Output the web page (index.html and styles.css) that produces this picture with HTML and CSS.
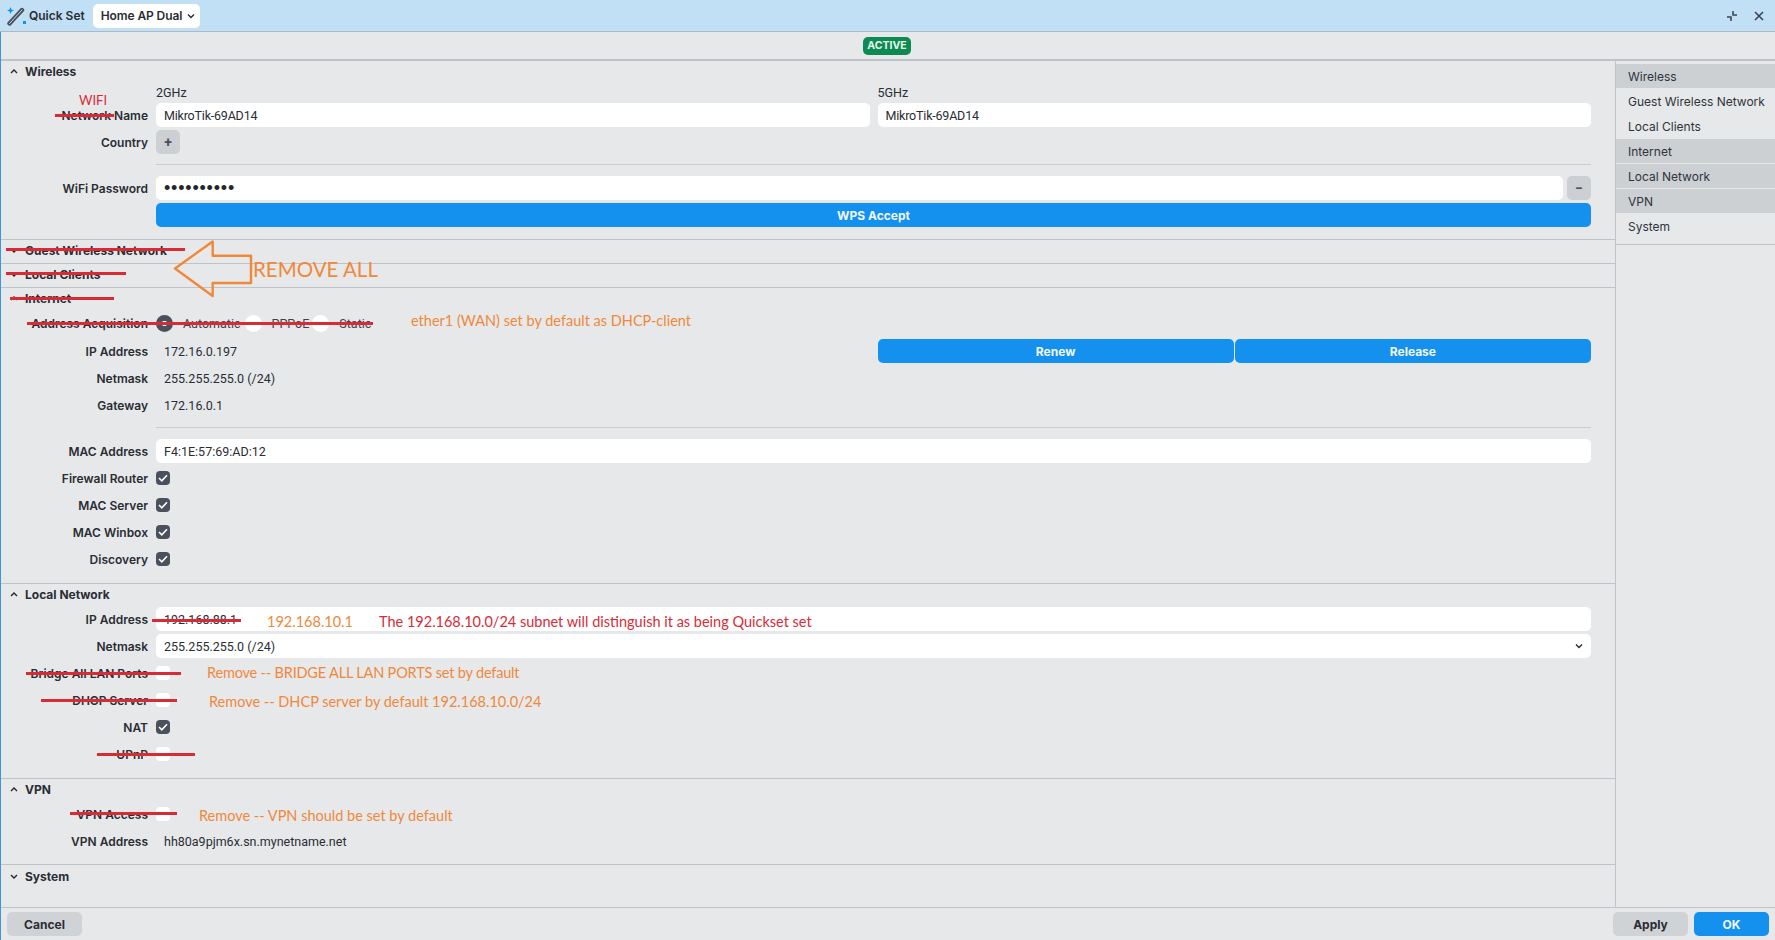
FILE: index.html
```html
<!DOCTYPE html>
<html lang="en">
<head>
<meta charset="utf-8">
<title>Quick Set</title>
<link rel="stylesheet" href="styles.css">
</head>
<body>
<div class="window">
  <header class="titlebar">
    <svg class="wand" width="20" height="20" viewBox="0 0 20 20"><path d="M3.500 17.500 16 4" stroke="#4a515d" stroke-width="4.400" stroke-linecap="round"/><path d="M3.500 17.500 16 4" stroke="#c1dff5" stroke-width="1" stroke-linecap="round"/><path d="M4.500 1 5.500 3.500 8 4.500 5.500 5.500 4.500 8 3.500 5.500 1 4.500 3.500 3.500z" fill="#1490ee"/><rect x="17" y="15" width="3" height="3" fill="#1490ee"/></svg>
    <span class="title">Quick Set</span>
    <div class="preset"><span>Home AP Dual</span><svg class="chev-s" width="8" height="6" viewBox="0 0 8 6"><path d="M1 1.500 4 4.500 7 1.500" fill="none" stroke="#23262b" stroke-width="1.300"/></svg></div>
    <div class="win-btns">
      <svg width="12" height="12" viewBox="0 0 12 12"><path d="M1 7H5V11M11 5H7V1" fill="none" stroke="#3c434d" stroke-width="1.500"/></svg>
      <svg width="12" height="12" viewBox="0 0 12 12"><path d="M2 2 10 10M10 2 2 10" stroke="#3c434d" stroke-width="1.600"/></svg>
    </div>
  </header>
  <div class="frame">
    <div class="status"><span class="badge">ACTIVE</span></div>
    <div class="columns">
      <main class="main">
        <section class="sec">
          <h2 class="sec-head"><svg class="chev" width="10" height="7" viewBox="0 0 10 7"><path d="M2 5 5 2 8 5" fill="none" stroke="#23262b" stroke-width="1.400"/></svg>Wireless</h2>
          <div class="row freq"><span class="label"></span><div class="two"><span>2GHz</span><span>5GHz</span></div></div>
          <div class="row first"><span class="label">Network Name</span><div class="two"><div class="input name">MikroTik-69AD14</div><div class="input name">MikroTik-69AD14</div></div></div>
          <div class="row"><span class="label">Country</span><div class="val"><span class="square">+</span></div></div>
          <div class="sep"></div>
          <div class="row"><span class="label">WiFi Password</span><div class="val pw"><div class="input grow dots">••••••••••</div><span class="square">−</span></div></div>
          <div class="row"><span class="label"></span><div class="btn primary wide">WPS Accept</div></div>
        </section>
        <section class="sec closed"><h2 class="sec-head"><svg class="chev" width="10" height="7" viewBox="0 0 10 7"><path d="M2 2 5 5 8 2" fill="none" stroke="#23262b" stroke-width="1.400"/></svg>Guest Wireless Network</h2></section>
        <section class="sec closed"><h2 class="sec-head"><svg class="chev" width="10" height="7" viewBox="0 0 10 7"><path d="M2 2 5 5 8 2" fill="none" stroke="#23262b" stroke-width="1.400"/></svg>Local Clients</h2></section>
        <section class="sec">
          <h2 class="sec-head"><svg class="chev" width="10" height="7" viewBox="0 0 10 7"><path d="M2 5 5 2 8 5" fill="none" stroke="#23262b" stroke-width="1.400"/></svg>Internet</h2>
          <div class="row row-radios"><span class="label">Address Acquisition</span><div class="val radios">
            <span class="radio on"></span><span class="opt opt-a">Automatic</span>
            <span class="radio"></span><span class="opt opt-b">PPPoE</span>
            <span class="radio"></span><span class="opt">Static</span>
          </div></div>
          <div class="row"><span class="label">IP Address</span><div class="two"><span class="text">172.16.0.197</span><div class="btn-pair"><div class="btn primary">Renew</div><div class="btn primary">Release</div></div></div></div>
          <div class="row"><span class="label">Netmask</span><div class="val text">255.255.255.0 (/24)</div></div>
          <div class="row"><span class="label">Gateway</span><div class="val text">172.16.0.1</div></div>
          <div class="sep"></div>
          <div class="row"><span class="label">MAC Address</span><div class="input grow">F4:1E:57:69:AD:12</div></div>
          <div class="row"><span class="label">Firewall Router</span><div class="val"><span class="check on"><svg width="10" height="8" viewBox="0 0 10 8"><path d="M1 4 3.800 6.800 9 1.200" fill="none" stroke="#fff" stroke-width="1.600"/></svg></span></div></div>
          <div class="row"><span class="label">MAC Server</span><div class="val"><span class="check on"><svg width="10" height="8" viewBox="0 0 10 8"><path d="M1 4 3.800 6.800 9 1.200" fill="none" stroke="#fff" stroke-width="1.600"/></svg></span></div></div>
          <div class="row"><span class="label">MAC Winbox</span><div class="val"><span class="check on"><svg width="10" height="8" viewBox="0 0 10 8"><path d="M1 4 3.800 6.800 9 1.200" fill="none" stroke="#fff" stroke-width="1.600"/></svg></span></div></div>
          <div class="row"><span class="label">Discovery</span><div class="val"><span class="check on"><svg width="10" height="8" viewBox="0 0 10 8"><path d="M1 4 3.800 6.800 9 1.200" fill="none" stroke="#fff" stroke-width="1.600"/></svg></span></div></div>
        </section>
        <section class="sec">
          <h2 class="sec-head"><svg class="chev" width="10" height="7" viewBox="0 0 10 7"><path d="M2 5 5 2 8 5" fill="none" stroke="#23262b" stroke-width="1.400"/></svg>Local Network</h2>
          <div class="row"><span class="label">IP Address</span><div class="input grow">192.168.88.1</div></div>
          <div class="row"><span class="label">Netmask</span><div class="input grow select"><span>255.255.255.0 (/24)</span><svg width="8" height="6" viewBox="0 0 8 6"><path d="M1 1.500 4 4.500 7 1.500" fill="none" stroke="#23262b" stroke-width="1.300"/></svg></div></div>
          <div class="row"><span class="label">Bridge All LAN Ports</span><div class="val"><span class="check"></span></div></div>
          <div class="row"><span class="label">DHCP Server</span><div class="val"><span class="check"></span></div></div>
          <div class="row"><span class="label">NAT</span><div class="val"><span class="check on"><svg width="10" height="8" viewBox="0 0 10 8"><path d="M1 4 3.800 6.800 9 1.200" fill="none" stroke="#fff" stroke-width="1.600"/></svg></span></div></div>
          <div class="row"><span class="label">UPnP</span><div class="val"><span class="check"></span></div></div>
        </section>
        <section class="sec sec-vpn">
          <h2 class="sec-head"><svg class="chev" width="10" height="7" viewBox="0 0 10 7"><path d="M2 5 5 2 8 5" fill="none" stroke="#23262b" stroke-width="1.400"/></svg>VPN</h2>
          <div class="row"><span class="label">VPN Access</span><div class="val"><span class="check"></span></div></div>
          <div class="row"><span class="label">VPN Address</span><div class="val text">hh80a9pjm6x.sn.mynetname.net</div></div>
        </section>
        <section class="sec last"><h2 class="sec-head"><svg class="chev" width="10" height="7" viewBox="0 0 10 7"><path d="M2 2 5 5 8 2" fill="none" stroke="#23262b" stroke-width="1.400"/></svg>System</h2></section>
      </main>
      <nav class="side">
        <div class="side-list">
          <a class="item on">Wireless</a>
          <a class="item">Guest Wireless Network</a>
          <a class="item">Local Clients</a>
          <a class="item on">Internet</a>
          <a class="item on">Local Network</a>
          <a class="item on">VPN</a>
          <a class="item">System</a>
        </div>
      </nav>
    </div>
    <footer class="foot">
      <div class="btn grey">Cancel</div>
      <div class="foot-right"><div class="btn grey">Apply</div><div class="btn primary">OK</div></div>
    </footer>
  </div>
  <div class="notes">
    <i class="strike s-network"></i><i class="strike s-guest"></i><i class="strike s-clients"></i><i class="strike s-internet"></i><i class="strike s-addr"></i><i class="strike s-ip"></i><i class="strike s-bridge"></i><i class="strike s-dhcp"></i><i class="strike s-upnp"></i><i class="strike s-vpn"></i>
    <svg class="arrow" width="90" height="70" viewBox="170 236 90 70"><path d="M175 268.500 212.700 241.500V255.700H251V283H212.700V296Z" fill="none" stroke="#f0883a" stroke-width="2.400" stroke-linejoin="round"/></svg>
    <span class="note red n-wifi">WIFI</span>
    <span class="note big n-remove">REMOVE ALL</span>
    <span class="note n-ether">ether1 (WAN) set by default as DHCP-client</span>
    <span class="note n-ip">192.168.10.1</span>
    <span class="note red n-subnet">The 192.168.10.0/24 subnet will distinguish it as being Quickset set</span>
    <span class="note n-bridge">Remove -- BRIDGE ALL LAN PORTS set by default</span>
    <span class="note n-dhcp">Remove -- DHCP server by default 192.168.10.0/24</span>
    <span class="note n-vpn">Remove -- VPN should be set by default</span>
  </div>
</div>
</body>
</html>
```
FILE: styles.css
```css
* { box-sizing: border-box; }
html, body { margin: 0; padding: 0; height: 100%; overflow: hidden; }
body { font-family: Roboto, "Liberation Sans", sans-serif; font-size: 12.500px; color: #2a2d33; background: #e6e8ea; }
.window { position: relative; width: 1775px; height: 940px; display: flex; flex-direction: column; }
.titlebar { height: 32px; flex: none; background: #c1dff5; border-bottom: 1px solid #aeb9c2; display: flex; align-items: center; padding: 0 0 0 6px; }
.wand { flex: none; margin-right: 3px; }
.title { font-family: Inter, sans-serif; font-size: 12px; font-weight: 600; color: #2a2f36; margin-right: 8px; white-space: nowrap; }
.preset { font-family: Inter, sans-serif; font-size: 12px; letter-spacing: -.1px; height: 24px; width: 107px; background: #fff; border-radius: 5px; display: flex; align-items: center; gap: 5px; padding-left: 8px; font-weight: 600; white-space: nowrap; }
.win-btns { margin-left: auto; display: flex; align-items: center; gap: 15px; padding-right: 10px; }
.frame { flex: 1; min-height: 0; display: flex; flex-direction: column; border-left: 1px solid #3a97e6; }
.status { height: 29px; flex: none; border-bottom: 2px solid #bdc3c8; display: flex; align-items: center; justify-content: center; padding-right: 2px; }
.badge { font-family: Inter, sans-serif; background: #0c8a52; color: #e6f5ee; font-size: 10.500px; font-weight: 700; border-radius: 5px; height: 18px; width: 48px; display: flex; align-items: center; justify-content: center; }
.columns { flex: 1; min-height: 0; display: flex; }
.main { width: 1615px; flex: none; border-right: 1px solid #bdc3c8; display: flex; flex-direction: column; }
.sec { border-bottom: 1px solid #bdc3c8; padding: 0 24px 12px 0; }
.sec.closed { padding-bottom: 3px; }
.sec.last { border-bottom: 0; padding-top: 1px; }
.sec-vpn { padding-bottom: 11px; }
.sec-head { font-family: Inter, sans-serif; margin: 0; height: 20px; font-size: 12px; font-weight: 700; color: #2a2d33; display: flex; align-items: center; padding-left: 8px; }
.chev { margin-right: 6px; flex: none; }
.row { display: flex; align-items: center; height: 24px; margin-top: 3px; }
.row.freq { height: 22px; margin-top: 0; }
.row.first { margin-top: 0; }
.row.row-radios { height: 25px; }
.label { font-family: Inter, sans-serif; font-size: 12px; width: 147px; flex: none; text-align: right; margin-right: 8px; font-weight: 600; color: #2a2d33; white-space: nowrap; }
.two { flex: 1; display: grid; grid-template-columns: 1fr 1fr; gap: 8px; align-items: center; min-width: 0; }
.val { flex: 1; display: flex; align-items: center; min-width: 0; }
.text { padding-left: 8px; }
.input { height: 24px; background: #fff; border-radius: 5px; padding: 0 8px; display: flex; align-items: center; }
.name { letter-spacing: -.2px; }
.grow { flex: 1; }
.dots { font-family: "Liberation Sans", sans-serif; font-size: 18px; letter-spacing: .8px; color: #23262b; }
.pw { gap: 4px; }
.select { justify-content: space-between; padding-right: 8px; }
.square { width: 24px; height: 24px; border-radius: 5px; background: #ccd0d3; color: #4a515d; display: flex; align-items: center; justify-content: center; font-size: 14px; font-weight: 700; flex: none; }
.sep { height: 1px; background: #c9cdd1; margin: 10px 0 11px 155px; }
.btn { font-family: Inter, sans-serif; font-size: 12px; height: 24px; border-radius: 5px; display: flex; align-items: center; justify-content: center; font-weight: 700; }
.primary { background: #1490ee; color: #f2f8fe; }
.wide { flex: 1; }
.grey { background: #d0d3d6; color: #2a2d33; width: 75px; }
.btn-pair { display: grid; grid-template-columns: 1fr 1fr; gap: 1px; }
.radio { width: 17px; height: 17px; border-radius: 50%; background: #fff; flex: none; }
.radio.on { background: radial-gradient(circle, #fff 0 2.500px, #4a515d 3px); }
.opt { margin-left: 10px; color: #3c434d; }
.opt-a { margin-right: 4px; }
.opt-b { margin-right: 3px; }
.check { width: 14px; height: 14px; border-radius: 4px; background: #fff; display: flex; align-items: center; justify-content: center; flex: none; }
.check.on { background: #4a515d; }
.side { flex: 1; min-width: 0; }
.side-list { padding: 3px 0 6px; border-bottom: 1px solid #bdc3c8; display: flex; flex-direction: column; gap: 1px; }
.item { font-family: Inter, sans-serif; font-size: 12px; height: 24px; display: flex; align-items: center; padding-left: 12px; color: #2f343b; white-space: nowrap; }
.item.on { background: #ccd0d3; }
.foot { height: 33px; flex: none; border-top: 1px solid #bdc3c8; display: flex; justify-content: space-between; align-items: center; padding: 0 6px; }
.foot-right { display: flex; gap: 6px; }
.foot .primary { width: 75px; }

.notes { position: absolute; inset: 0; pointer-events: none; }
.strike { position: absolute; height: 3px; background: #d92b36; }
.s-network { left: 55px; top: 114px; width: 59px; }
.s-guest { left: 6px; top: 248px; width: 179px; }
.s-clients { left: 6px; top: 272px; width: 120px; }
.s-internet { left: 10px; top: 297px; width: 104px; }
.s-addr { left: 27px; top: 322px; width: 346px; }
.s-ip { left: 152px; top: 619px; width: 89px; }
.s-bridge { left: 26px; top: 672px; width: 155px; }
.s-dhcp { left: 41px; top: 699px; width: 136px; }
.s-upnp { left: 97px; top: 753px; width: 98px; }
.s-vpn { left: 70px; top: 812px; width: 107px; }
.arrow { position: absolute; left: 170px; top: 236px; }
.note { position: absolute; font-family: Lato, "Open Sans", sans-serif; font-size: 14.500px; line-height: 18px; color: #f0883a; white-space: nowrap; }
.note.red { color: #d92b36; }
.note.big { font-size: 20.500px; line-height: 26px; }
.n-wifi { left: 79px; top: 91px; font-size: 13px; }
.n-remove { left: 253px; top: 256px; }
.n-ether { left: 411px; top: 312px; }
.n-ip { left: 267px; top: 613px; }
.n-subnet { left: 379px; top: 613px; }
.n-bridge { left: 207px; top: 664px; letter-spacing: -.18px; }
.n-dhcp { left: 209px; top: 693px; }
.n-vpn { left: 199px; top: 807px; }
```
